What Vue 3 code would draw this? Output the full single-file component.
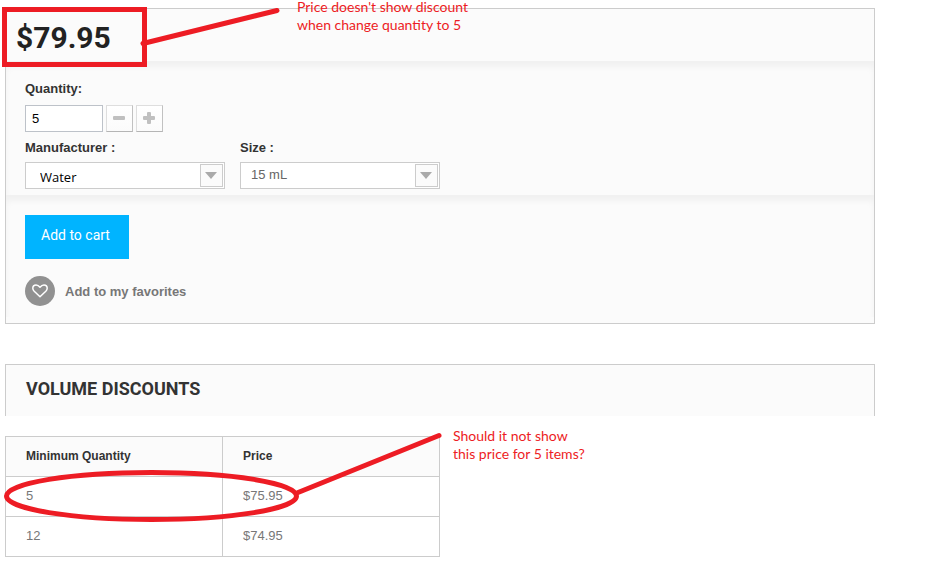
<script setup>
import { ref } from 'vue'

const quantity = ref('5')
const manufacturer = ref('Water')
const size = ref('15 mL')
const discounts = [
  { quantity: 5, price: '$75.95' },
  { quantity: 12, price: '$74.95' },
]

function step(by) {
  quantity.value = String(Math.max(1, (parseInt(quantity.value, 10) || 0) + by))
}
</script>

<template>
  <main class="page">
    <form class="card" @submit.prevent>
      <div class="price-row">
        <strong class="price">$79.95</strong>
      </div>

      <div class="section attributes">
        <label class="label" for="quantity">Quantity:</label>
        <div class="quantity">
          <input id="quantity" v-model="quantity" class="quantity-input" type="text" />
          <button class="step" type="button" aria-label="Decrease quantity" @click="step(-1)">
            <svg width="12" height="12" viewBox="0 0 12 12"><path d="M1 4h10a1 1 0 0 1 1 1v2a1 1 0 0 1-1 1H1a1 1 0 0 1-1-1V5a1 1 0 0 1 1-1z" /></svg>
          </button>
          <button class="step" type="button" aria-label="Increase quantity" @click="step(1)">
            <svg width="12" height="12" viewBox="0 0 12 12"><path d="M5 0h2a1 1 0 0 1 1 1v3h3a1 1 0 0 1 1 1v2a1 1 0 0 1-1 1H8v3a1 1 0 0 1-1 1H5a1 1 0 0 1-1-1V8H1a1 1 0 0 1-1-1V5a1 1 0 0 1 1-1h3V1a1 1 0 0 1 1-1z" /></svg>
          </button>
        </div>
        <div class="options">
          <div class="option">
            <label class="label" for="manufacturer">Manufacturer :</label>
            <div class="select-box">
              <select id="manufacturer" v-model="manufacturer" class="select select-maker">
                <option>Water</option>
              </select>
              <span class="arrow">
                <svg width="12" height="7" viewBox="0 0 12 7"><path d="M0 0h12L6 7z" /></svg>
              </span>
            </div>
          </div>
          <div class="option">
            <label class="label" for="size">Size :</label>
            <div class="select-box">
              <select id="size" v-model="size" class="select">
                <option>15 mL</option>
              </select>
              <span class="arrow">
                <svg width="12" height="7" viewBox="0 0 12 7"><path d="M0 0h12L6 7z" /></svg>
              </span>
            </div>
          </div>
        </div>
      </div>

      <div class="section actions">
        <button class="cart" type="submit">Add to cart</button>
        <a class="favorite" href="#">
          <span class="heart">
            <svg width="16" height="14" viewBox="0 0 16 14">
              <path d="M8 12.700 2.200 7.200C1.200 6.200.800 5.200.800 4.200.800 2.200 2 .900 4.100.900 5.700.900 7 1.900 8 3.200 9 1.900 10.300.900 11.900.900 14 .900 15.200 2.200 15.200 4.200 15.200 5.200 14.800 6.200 13.800 7.200z" />
            </svg>
          </span>
          <span class="favorite-text">Add to my favorites</span>
        </a>
      </div>
    </form>

    <section>
      <h3 class="heading">Volume discounts</h3>
      <table class="discounts">
        <thead>
          <tr><th scope="col">Minimum Quantity</th><th scope="col">Price</th></tr>
        </thead>
        <tbody>
          <tr v-for="row in discounts" :key="row.quantity">
            <td>{{ row.quantity }}</td>
            <td>{{ row.price }}</td>
          </tr>
        </tbody>
      </table>
    </section>

    <svg class="markup" width="460" height="564" viewBox="0 0 460 564" aria-hidden="true">
      <rect x="4.500" y="9.500" width="140" height="55" />
      <path d="M143 43.500 277 10.500" stroke-linecap="round" />
      <ellipse cx="151.500" cy="496" rx="145" ry="23.500" />
      <path d="M298 492.500 439 435.500" stroke-linecap="round" />
    </svg>
    <p class="note note-price"><span>Price doesn't show discount</span><span>when change quantity to 5</span></p>
    <p class="note note-discount"><span>Should it not show</span><span>this price for 5 items?</span></p>
  </main>
</template>

<style>
body {
  margin: 0;
  background: #fff;
}
</style>

<style scoped>
.page {
  position: relative;
  padding: 8px 70px 7px 5px;
  font: 13px/18px "Liberation Sans", Arial, sans-serif;
  color: #777;
}

.page *,
.page {
  box-sizing: border-box;
}

.card {
  padding-bottom: 6px;
  margin-bottom: 40px;
  border: 1px solid #ccc;
  background: #fbfbfb;
}

.price-row {
  display: flex;
  padding: 14px 10px 8px;
}

.price {
  font: bold 30px/30px Roboto, sans-serif;
  color: #222;
}

.section {
  box-shadow: inset 0 6px 6px rgba(0, 0, 0, 0.045);
  padding: 0 19px;
}

.attributes {
  padding-top: 19px;
  padding-bottom: 6px;
}

.label {
  display: block;
  font-weight: bold;
  color: #333;
}

.quantity {
  display: flex;
  gap: 3px;
  margin: 7px 0;
}

.quantity-input {
  width: 78px;
  height: 27px;
  padding: 0 6px;
  border: 1px solid #bdc2c9;
  border-radius: 0;
  background: #fff;
  font: 13px/18px "Liberation Sans", Arial, sans-serif;
  color: #000;
}

.step {
  display: flex;
  align-items: center;
  justify-content: center;
  width: 27px;
  height: 27px;
  padding: 0 1px 2px 0;
  border: 1px solid;
  border-color: #dedede #c1c1c1 #b5b5b5 #dedede;
  background: linear-gradient(#fff, #fbfbfb);
  fill: #c0c0c0;
}

.options {
  display: flex;
  flex-wrap: wrap;
  gap: 15px;
}

.option {
  flex: 0 0 200px;
}

.select-box {
  display: grid;
  align-items: center;
  margin-top: 5px;
}

.select {
  grid-area: 1 / 1;
  width: 100%;
  height: 27px;
  padding: 0 30px 2px 10px;
  border: 1px solid #ccc;
  border-radius: 0;
  appearance: none;
  background: #fff;
  font: 13px/18px "Liberation Sans", Arial, sans-serif;
  color: #666;
}

.select-maker {
  padding: 2px 30px 0 14px;
  font-family: "Open Sans", sans-serif;
  color: #000;
}

.arrow {
  grid-area: 1 / 1;
  justify-self: end;
  display: flex;
  align-items: center;
  justify-content: center;
  width: 23px;
  height: 23px;
  margin-right: 2px;
  padding-right: 1px;
  border: 1px solid #ccc;
  background: #fbfbfb;
  fill: #aaa;
  pointer-events: none;
}

.actions {
  display: flex;
  flex-direction: column;
  align-items: flex-start;
  gap: 17px;
  padding-top: 20px;
  padding-bottom: 11px;
}

.cart {
  height: 44px;
  padding: 0 19px 4px 16px;
  border: 0;
  background: #00b4ff;
  font: 14px/20px Roboto, sans-serif;
  color: #fff;
}

.favorite {
  display: flex;
  align-items: center;
  gap: 10px;
  font-weight: bold;
  color: #777;
  text-decoration: none;
}

.favorite-text {
  padding-top: 2px;
}

.heart {
  display: flex;
  align-items: center;
  justify-content: center;
  width: 30px;
  height: 30px;
  padding: 0 1px 1px 0;
  border-radius: 50%;
  background: #919191;
}

.heart path {
  fill: none;
  stroke: #fff;
  stroke-width: 1.5;
  stroke-linejoin: round;
}

.heading {
  margin: 0 0 20px;
  padding: 13px 20px 17px;
  border: 1px solid #ccc;
  border-bottom: 0;
  background: #fbfbfb;
  font: bold 18px/21px Roboto, sans-serif;
  color: #333;
  text-transform: uppercase;
}

.discounts {
  width: 50%;
  table-layout: fixed;
  border-collapse: collapse;
}

.discounts th,
.discounts td {
  height: 40px;
  padding: 0 20px 2px;
  border: 1px solid #ccc;
  text-align: left;
}

.discounts th {
  background: #fbfbfb;
  font: bold 12px/18px "Liberation Sans", Arial, sans-serif;
  color: #333;
}

.markup {
  position: absolute;
  top: 0;
  left: 0;
  fill: none;
  stroke: #ed1c24;
  stroke-width: 5;
  pointer-events: none;
}

.note {
  position: absolute;
  display: flex;
  flex-direction: column;
  gap: 4px;
  margin: 0;
  font: 14px/14px Lato, Calibri, sans-serif;
  color: #ed1c24;
  white-space: nowrap;
}

.note-price {
  top: 0;
  left: 297px;
}

.note-discount {
  top: 429px;
  left: 453px;
}
</style>
